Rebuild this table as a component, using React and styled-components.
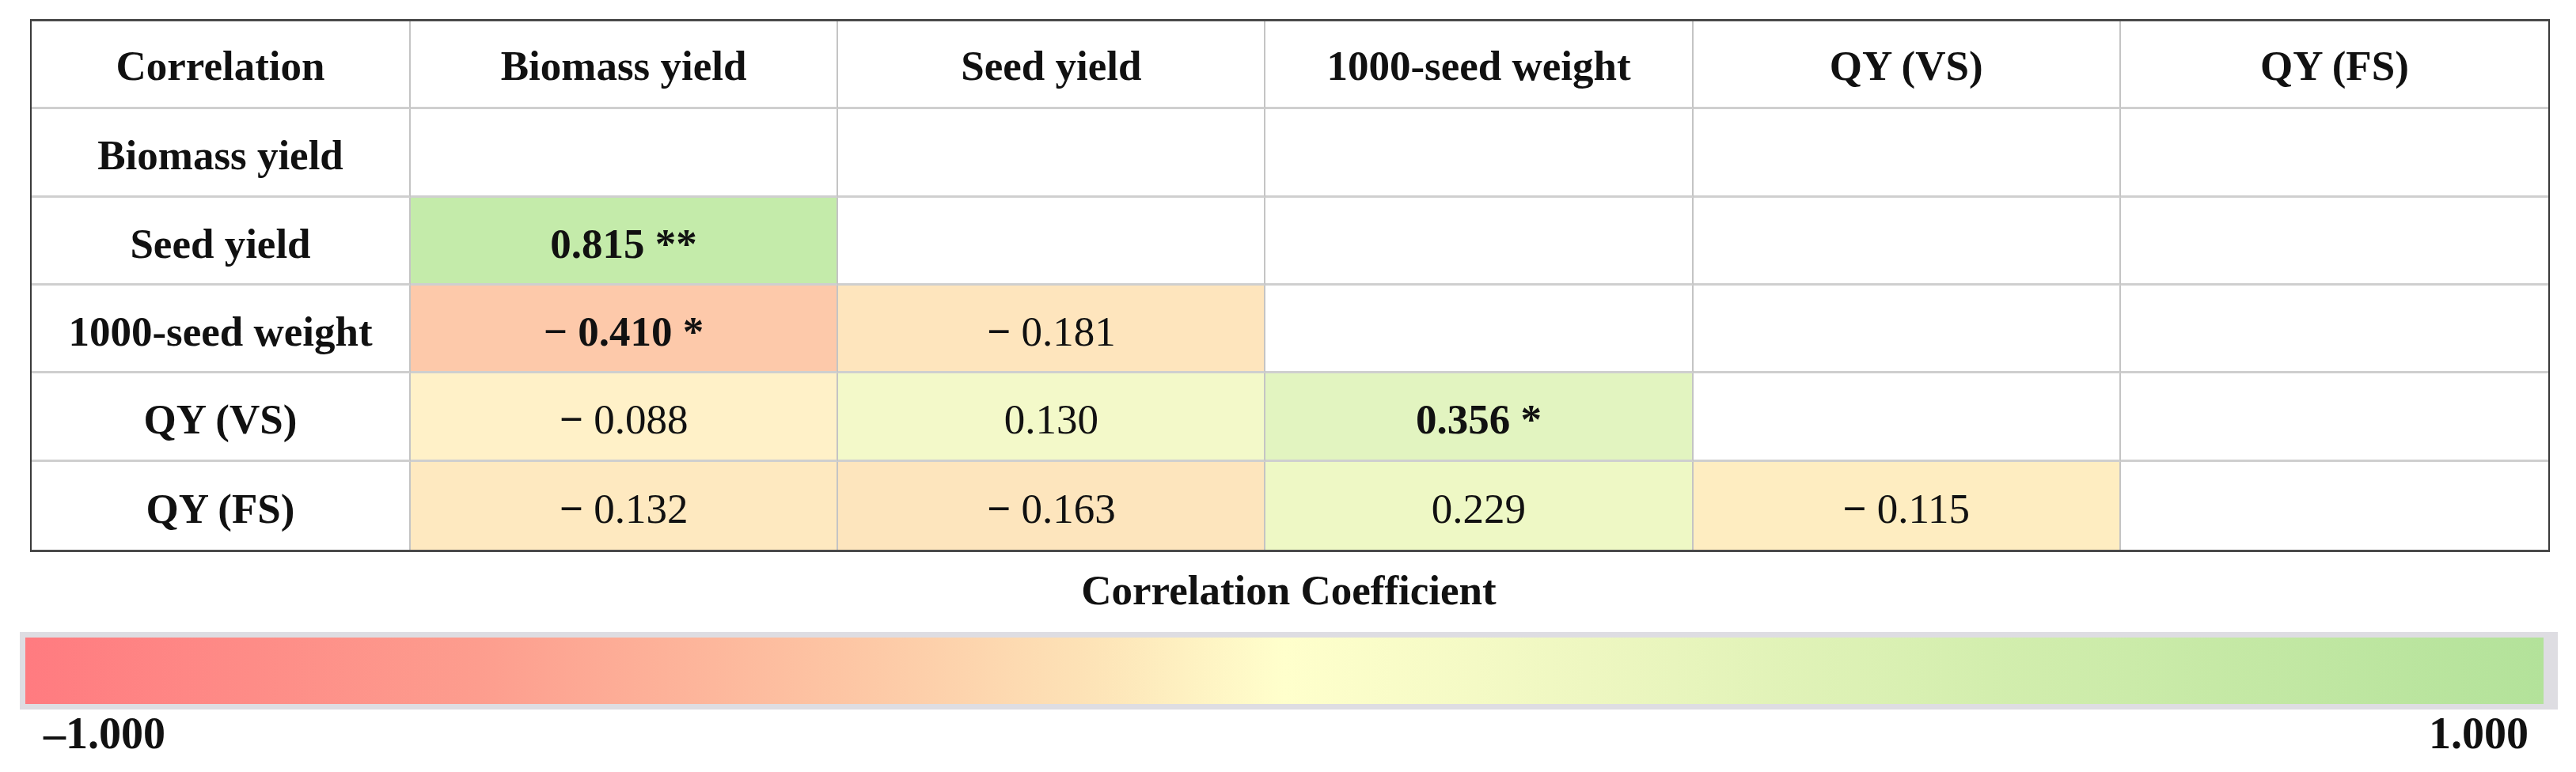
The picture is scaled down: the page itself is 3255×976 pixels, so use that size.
import styled, { createGlobalStyle } from 'styled-components'

const GlobalStyle = createGlobalStyle`
  body {
    margin: 0;
    background: #ffffff;
    font-family: 'Liberation Serif', 'Times New Roman', serif;
    color: #111;
  }
`

const Page = styled.div`
  width: 3255px;
  height: 976px;
  padding: 24px 0 0 25px;
  box-sizing: border-box;
  display: flex;
  flex-direction: column;
`

const Table = styled.div`
  margin-left: 13px;
  width: 3184px;
  height: 674px;
  box-sizing: border-box;
  display: grid;
  grid-template-columns: 479px repeat(5, 1fr);
  grid-template-rows: repeat(6, 1fr);
  border-top: 3px solid #4a4a4a;
  border-bottom: 3px solid #4a4a4a;
  border-left: 2px solid #3a3a3a;
  border-right: 2px solid #3a3a3a;
`

const Cell = styled.div`
  display: flex;
  align-items: center;
  justify-content: center;
  background: ${(p) => p.$bg || '#ffffff'};
  border-right: ${(p) => (p.$lastCol ? 'none' : '2px solid #c4c4c4')};
  border-bottom: ${(p) => (p.$lastRow ? 'none' : '3px solid #cfcfcf')};
  font-size: 53px;
  font-weight: ${(p) => (p.$bold ? 700 : 400)};
  white-space: pre;
  padding-top: ${(p) => (p.$head ? '4px' : '8px')};
  box-sizing: border-box;
`

const Minus = styled.span`
  font-weight: 700;
`

const Title = styled.div`
  margin-top: 22px;
  width: 3207px;
  text-align: center;
  font-size: 53px;
  font-weight: 700;
  line-height: 1;
`

const Bar = styled.div`
  margin-top: 26px;
  width: 3207px;
  height: 98px;
  box-sizing: border-box;
  border: 7px solid #dedde2;
  border-right-width: 18px;
  background: linear-gradient(
    to right,
    #ff7b80 0%,
    #fd9d8e 18%,
    #fdc4a3 32%,
    #fde2b6 42%,
    #ffffcc 50%,
    #eef7c1 62%,
    #d3eeae 78%,
    #b3e29a 100%
  );
`

const Scale = styled.div`
  width: 3207px;
  display: flex;
  justify-content: space-between;
  padding: 2px 37px 0 30px;
  box-sizing: border-box;
  font-size: 56px;
  font-weight: 700;
  line-height: 1;
`

const headers = ['Correlation', 'Biomass yield', 'Seed yield', '1000-seed weight', 'QY (VS)', 'QY (FS)']
const labels = ['Biomass yield', 'Seed yield', '1000-seed weight', 'QY (VS)', 'QY (FS)']

const values = [
  [],
  [{ v: '0.815', s: ' **', bg: '#c4ebaa' }],
  [
    { v: '−0.410', s: ' *', bg: '#fdc9aa' },
    { v: '−0.181', bg: '#fee5bd' },
  ],
  [
    { v: '−0.088', bg: '#fff1c8' },
    { v: '0.130', bg: '#f3f9c9' },
    { v: '0.356', s: ' *', bg: '#e2f4c0' },
  ],
  [
    { v: '−0.132', bg: '#fee9c0' },
    { v: '−0.163', bg: '#fde5bd' },
    { v: '0.229', bg: '#eef8c5' },
    { v: '−0.115', bg: '#feedc1' },
  ],
]

function Value({ item }) {
  const neg = item.v.startsWith('−')
  const num = neg ? item.v.slice(1) : item.v
  return (
    <>
      {neg && <Minus>− </Minus>}
      {num}
      {item.s}
    </>
  )
}

function App() {
  return (
    <Page>
      <GlobalStyle />
      <Table>
        {headers.map((h, i) => (
          <Cell key={h} $bold $head $lastCol={i === 5}>
            {h}
          </Cell>
        ))}
        {labels.map((label, r) => (
          <>
            <Cell key={label} $bold $lastRow={r === 4}>
              {label}
            </Cell>
            {[0, 1, 2, 3, 4].map((c) => {
              const item = values[r][c]
              return (
                <Cell
                  key={label + c}
                  $bg={item && item.bg}
                  $bold={item && !!item.s}
                  $lastCol={c === 4}
                  $lastRow={r === 4}
                >
                  {item && <Value item={item} />}
                </Cell>
              )
            })}
          </>
        ))}
      </Table>
      <Title>Correlation Coefficient</Title>
      <Bar />
      <Scale>
        <span>–1.000</span>
        <span>1.000</span>
      </Scale>
    </Page>
  )
}

export default App
